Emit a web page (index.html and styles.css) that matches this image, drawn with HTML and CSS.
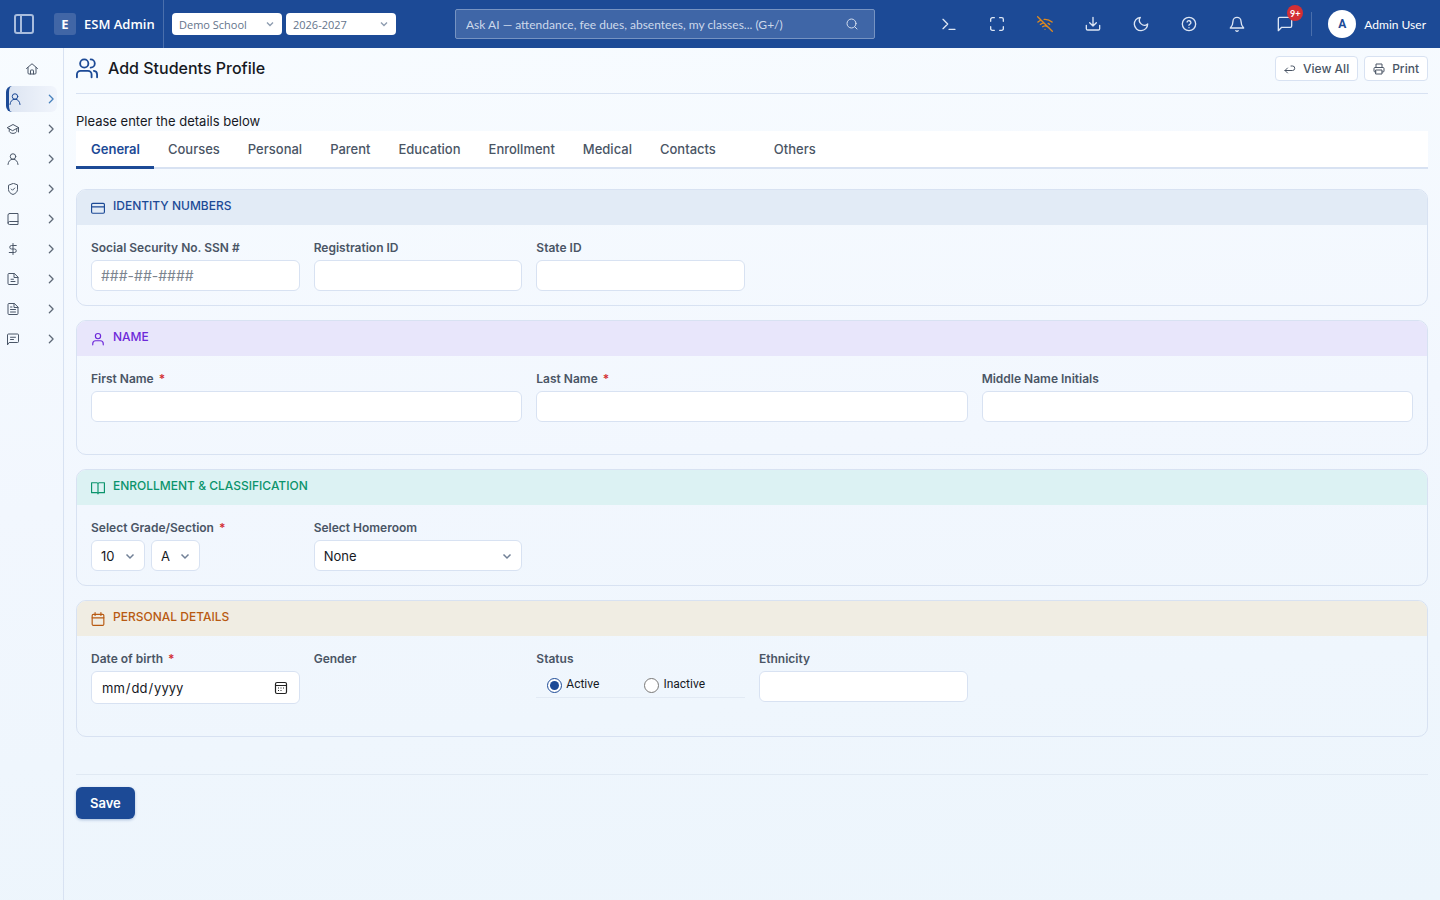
FILE: index.html
```html
<!DOCTYPE html>
<html lang="en">
<head>
<meta charset="utf-8">
<meta name="viewport" content="width=device-width, initial-scale=1">
<title>Add Students Profile</title>
<link rel="stylesheet" href="styles.css">
</head>
<body>
<svg class="sprite" aria-hidden="true">
  <symbol id="panel" viewBox="0 0 24 24"><rect x="3" y="3" width="18" height="18" rx="2"/><path d="M9 3v18"/></symbol>
  <symbol id="search" viewBox="0 0 24 24"><circle cx="11" cy="11" r="9"/><path d="m22 22-4.500-4.500"/></symbol>
  <symbol id="terminal" viewBox="0 0 24 24"><path d="m3 5 7 7-7 7M12 20h9"/></symbol>
  <symbol id="expand" viewBox="0 0 24 24"><path d="M8 2.500H5a2.500 2.500 0 0 0-2.500 2.500v3M21.500 8V5A2.500 2.500 0 0 0 19 2.500h-3M2.500 16v3A2.500 2.500 0 0 0 5 21.500h3M16 21.500h3a2.500 2.500 0 0 0 2.500-2.500v-3"/></symbol>
  <symbol id="wifi-off" viewBox="0 0 24 24"><path d="m1 1 22 22M16.700 11.100A10.900 10.900 0 0 1 19 12.600M5 12.600a10.900 10.900 0 0 1 5.200-2.400M10.700 5A16 16 0 0 1 22.600 9M1.400 9a15.900 15.900 0 0 1 4.700-2.900M8.500 16.100a6 6 0 0 1 7 0M12 20h.01"/></symbol>
  <symbol id="download" viewBox="0 0 24 24"><path d="M2 14v5a2 2 0 0 0 2 2h16a2 2 0 0 0 2-2v-5M7 10l5 5 5-5M12 15V2"/></symbol>
  <symbol id="moon" viewBox="0 0 24 24"><path d="M11 2a7.500 7.500 0 0 0 11 10A10 10 0 1 1 11 2Z"/></symbol>
  <symbol id="help" viewBox="0 0 24 24"><circle cx="12" cy="12" r="10"/><path d="M9.100 9a3 3 0 0 1 5.800 1c0 2-3 2.600-3 4M12 17.500h.01"/></symbol>
  <symbol id="bell" viewBox="0 0 24 24"><path d="M18 8A6 6 0 0 0 6 8c0 6-1.500 7.500-4 10h20c-2.500-2.500-4-4-4-10M10.300 22a2 2 0 0 0 3.400 0"/></symbol>
  <symbol id="message" viewBox="0 0 24 24"><path d="M22 15a2 2 0 0 1-2 2H7l-5 5V4a2 2 0 0 1 2-2h16a2 2 0 0 1 2 2z"/></symbol>
  <symbol id="home" viewBox="0 0 24 24"><path d="M1 11 12 1.500 23 11M4 9v11a2 2 0 0 0 2 2h12a2 2 0 0 0 2-2V9M9 22v-7a1 1 0 0 1 1-1h4a1 1 0 0 1 1 1v7"/></symbol>
  <symbol id="person" viewBox="0 0 24 24"><circle cx="12" cy="7" r="5.500"/><path d="M2 23c.5-6 4-10.500 10-10.500S21.500 17 22 23"/></symbol>
  <symbol id="user" viewBox="0 0 24 24"><circle cx="12" cy="7" r="4.500"/><path d="M3 22v-2a5 5 0 0 1 5-5h8a5 5 0 0 1 5 5v2"/></symbol>
  <symbol id="users" viewBox="0 0 24 24"><circle cx="9" cy="6" r="4.500"/><path d="M1 21v-3a4 4 0 0 1 4-4h8a4 4 0 0 1 4 4v3M16 1.500a4.500 4.500 0 0 1 0 9M19.500 14a4 4 0 0 1 3.500 4v3"/></symbol>
  <symbol id="cap" viewBox="0 0 24 24"><path d="M1 9 12 3l11 6-11 6zM4.500 11.500V17c3 5 12 5 15 0v-5.500M23 9v9"/></symbol>
  <symbol id="shield" viewBox="0 0 24 24"><path d="M12 1 3 4.500V13c0 4.500 3.500 8 9 10 5.500-2 9-5.500 9-10V4.500zM8.500 12l2.500 2.500 4.500-4.500"/></symbol>
  <symbol id="book" viewBox="0 0 24 24"><path d="M5 1h17v22H5a3 3 0 0 1-3-3V4a3 3 0 0 1 3-3ZM2 20a3 3 0 0 1 3-3h17"/></symbol>
  <symbol id="dollar" viewBox="0 0 24 24"><path d="M12 1v22M18.500 5H9a3.500 3.500 0 0 0 0 7h6a3.500 3.500 0 0 1 0 7H4.500"/></symbol>
  <symbol id="file" viewBox="0 0 24 24"><path d="M14 1H4a2 2 0 0 0-2 2v18a2 2 0 0 0 2 2h16a2 2 0 0 0 2-2V9zM14 1v8h8M8 12.500h5M8 17h8"/></symbol>
  <symbol id="file-lines" viewBox="0 0 24 24"><path d="M14 1H4a2 2 0 0 0-2 2v18a2 2 0 0 0 2 2h16a2 2 0 0 0 2-2V9zM14 1v8h8M7 8h3M7 13h10M7 18h10"/></symbol>
  <symbol id="chat" viewBox="0 0 24 24"><path d="M1 23V4a2 2 0 0 1 2-2h18a2 2 0 0 1 2 2v13a2 2 0 0 1-2 2H5zM7 8.500h10M7 13h6"/></symbol>
  <symbol id="chevron" viewBox="0 0 24 24"><path d="m8 3 9 9-9 9"/></symbol>
  <symbol id="return" viewBox="0 0 24 24"><path d="M7 10l-5 5 5 5M2 15h15a4.500 4.500 0 0 0 0-9h-3"/></symbol>
  <symbol id="printer" viewBox="0 0 24 24"><path d="M6 9V2h12v7M6 18H4a2 2 0 0 1-2-2v-5a2 2 0 0 1 2-2h16a2 2 0 0 1 2 2v5a2 2 0 0 1-2 2h-2M6 14h12v8H6z"/></symbol>
  <symbol id="card" viewBox="0 0 24 24"><rect x="1" y="4" width="22" height="17" rx="2"/><path d="M1 10h22"/></symbol>
  <symbol id="open-book" viewBox="0 0 24 24"><path d="M1 3h9a2 2 0 0 1 2 2v17a2 2 0 0 0-2-2H1zM23 3h-9a2 2 0 0 0-2 2v17a2 2 0 0 1 2-2h9z"/></symbol>
  <symbol id="calendar" viewBox="0 0 24 24"><rect x="2" y="4" width="20" height="19" rx="2"/><path d="M7 1v5M17 1v5M2 10h20"/></symbol>
</svg>

<header class="topbar">
  <button class="menu-button" type="button" aria-label="Toggle sidebar"><svg class="icon"><use href="#panel"/></svg></button>
  <a class="brand" href="#"><span class="brand-mark">E</span><span>ESM Admin</span></a>
  <div class="context">
    <select aria-label="School"><option>Demo School</option></select>
    <select aria-label="School year"><option>2026-2027</option></select>
  </div>
  <form class="search">
    <input type="text" aria-label="Ask AI" placeholder="Ask AI — attendance, fee dues, absentees, my classes... (G+/)">
    <button type="button" aria-label="Search"><svg class="icon"><use href="#search"/></svg></button>
  </form>
  <div class="actions">
    <button type="button" aria-label="Console"><svg class="icon"><use href="#terminal"/></svg></button>
    <button type="button" aria-label="Full screen"><svg class="icon"><use href="#expand"/></svg></button>
    <button class="offline" type="button" aria-label="Offline"><svg class="icon"><use href="#wifi-off"/></svg></button>
    <button type="button" aria-label="Download"><svg class="icon"><use href="#download"/></svg></button>
    <button type="button" aria-label="Dark mode"><svg class="icon"><use href="#moon"/></svg></button>
    <button type="button" aria-label="Help"><svg class="icon"><use href="#help"/></svg></button>
    <button type="button" aria-label="Notifications"><svg class="icon"><use href="#bell"/></svg></button>
    <button type="button" aria-label="Messages"><svg class="icon"><use href="#message"/></svg><span class="badge">9+</span></button>
  </div>
  <button class="account" type="button"><span class="avatar">A</span><span>Admin User</span></button>
</header>

<div class="shell">
  <nav class="sidebar" aria-label="Main">
    <a class="nav-home" href="#" aria-label="Home"><svg class="icon"><use href="#home"/></svg></a>
    <a class="nav-item active" href="#" aria-label="Students"><svg class="icon"><use href="#person"/></svg><svg class="icon arrow"><use href="#chevron"/></svg></a>
    <a class="nav-item" href="#" aria-label="Academics"><svg class="icon"><use href="#cap"/></svg><svg class="icon arrow"><use href="#chevron"/></svg></a>
    <a class="nav-item" href="#" aria-label="Staff"><svg class="icon"><use href="#person"/></svg><svg class="icon arrow"><use href="#chevron"/></svg></a>
    <a class="nav-item" href="#" aria-label="Attendance"><svg class="icon"><use href="#shield"/></svg><svg class="icon arrow"><use href="#chevron"/></svg></a>
    <a class="nav-item" href="#" aria-label="Library"><svg class="icon"><use href="#book"/></svg><svg class="icon arrow"><use href="#chevron"/></svg></a>
    <a class="nav-item" href="#" aria-label="Billing"><svg class="icon"><use href="#dollar"/></svg><svg class="icon arrow"><use href="#chevron"/></svg></a>
    <a class="nav-item" href="#" aria-label="Documents"><svg class="icon"><use href="#file"/></svg><svg class="icon arrow"><use href="#chevron"/></svg></a>
    <a class="nav-item" href="#" aria-label="Reports"><svg class="icon"><use href="#file-lines"/></svg><svg class="icon arrow"><use href="#chevron"/></svg></a>
    <a class="nav-item" href="#" aria-label="Messaging"><svg class="icon"><use href="#chat"/></svg><svg class="icon arrow"><use href="#chevron"/></svg></a>
  </nav>

  <main class="content">
    <div class="page-head">
      <svg class="icon"><use href="#users"/></svg>
      <h1>Add Students Profile</h1>
      <button type="button"><svg class="icon"><use href="#return"/></svg>View All</button>
      <button type="button"><svg class="icon"><use href="#printer"/></svg>Print</button>
    </div>
    <p class="intro">Please enter the details below</p>
    <nav class="tabs" aria-label="Profile sections">
      <a class="current" href="#">General</a>
      <a href="#">Courses</a>
      <a href="#">Personal</a>
      <a href="#">Parent</a>
      <a href="#">Education</a>
      <a href="#">Enrollment</a>
      <a href="#">Medical</a>
      <a href="#">Contacts</a>
      <a class="apart" href="#">Others</a>
    </nav>

    <form class="profile">
      <section class="panel blue">
        <h2><svg class="icon"><use href="#card"/></svg>Identity Numbers</h2>
        <div class="fields">
          <div class="field"><label for="ssn">Social Security No. SSN #</label><input id="ssn" type="text" placeholder="###-##-####"></div>
          <div class="field"><label for="reg">Registration ID</label><input id="reg" type="text"></div>
          <div class="field"><label for="state">State ID</label><input id="state" type="text"></div>
        </div>
      </section>

      <section class="panel purple">
        <h2><svg class="icon"><use href="#user"/></svg>Name</h2>
        <div class="fields roomy">
          <div class="field wide"><label for="first">First Name <span class="required">*</span></label><input id="first" type="text"></div>
          <div class="field wide"><label for="last">Last Name <span class="required">*</span></label><input id="last" type="text"></div>
          <div class="field wide"><label for="middle">Middle Name Initials</label><input id="middle" type="text"></div>
        </div>
      </section>

      <section class="panel green">
        <h2><svg class="icon"><use href="#open-book"/></svg>Enrollment &amp; Classification</h2>
        <div class="fields">
          <div class="field">
            <label for="grade">Select Grade/Section <span class="required">*</span></label>
            <div class="pair">
              <select id="grade"><option>10</option></select>
              <select aria-label="Section"><option>A</option></select>
            </div>
          </div>
          <div class="field"><label for="homeroom">Select Homeroom</label><select id="homeroom"><option>None</option></select></div>
        </div>
      </section>

      <section class="panel amber">
        <h2><svg class="icon"><use href="#calendar"/></svg>Personal Details</h2>
        <div class="fields roomy">
          <div class="field"><label for="dob">Date of birth <span class="required">*</span></label><input id="dob" type="date"></div>
          <div class="field"><span class="label">Gender</span></div>
          <div class="field" role="radiogroup" aria-labelledby="status">
            <span class="label" id="status">Status</span>
            <div class="choices">
              <label><input type="radio" name="status" checked><span>Active</span></label>
              <label><input type="radio" name="status"><span>Inactive</span></label>
            </div>
          </div>
          <div class="field"><label for="ethnicity">Ethnicity</label><input id="ethnicity" type="text"></div>
        </div>
      </section>

      <div class="form-foot"><button type="submit">Save</button></div>
    </form>
  </main>
</div>
</body>
</html>
```
FILE: styles.css
```css
:root {
  --blue: #1c4a96;
  --line: #d8e2f2;
  --ink: #16191f;
  --muted: #4a5565;
}

* { box-sizing: border-box; }

body {
  margin: 0;
  min-height: 100vh;
  display: flex;
  flex-direction: column;
  background: linear-gradient(175deg, #f8fcff 0%, #f2f7fe 50%, #ecf5fc 100%);
  color: var(--ink);
  font-family: Inter, sans-serif;
  font-size: 13px;
}

button, input, select { font: inherit; color: inherit; }
button { cursor: pointer; }
a { color: inherit; text-decoration: none; }
.sprite { display: none; }

.icon {
  width: 16px;
  height: 16px;
  flex: none;
  fill: none;
  stroke: currentColor;
  stroke-width: 2;
  stroke-linecap: round;
  stroke-linejoin: round;
}

/* Top bar */
.topbar {
  display: flex;
  align-items: center;
  height: 48px;
  background: var(--blue);
  color: #fff;
  font-family: Lato, "Open Sans", sans-serif;
  font-size: 12px;
}

.topbar button {
  display: flex;
  align-items: center;
  justify-content: center;
  padding: 0;
  border: 0;
  background: none;
}

.topbar .menu-button { width: 48px; height: 48px; color: #a9bddd; }
.menu-button .icon { width: 24px; height: 24px; }

.brand {
  display: flex;
  align-items: center;
  align-self: stretch;
  gap: 8px;
  width: 116px;
  padding-left: 6px;
  border-right: 1px solid #4a6fac;
  font-family: "Open Sans", sans-serif;
  font-size: 13px;
  font-weight: 600;
  white-space: nowrap;
}

.brand-mark {
  display: grid;
  place-items: center;
  width: 22px;
  height: 22px;
  border-radius: 3px;
  background: #4166a6;
  font-weight: 700;
}

.context { display: flex; gap: 4px; padding-left: 8px; }

.context select {
  appearance: none;
  width: 110px;
  height: 22px;
  padding: 0 20px 0 7px;
  border: 0;
  border-radius: 4px;
  background: #fff url("data:image/svg+xml,%3Csvg xmlns='http://www.w3.org/2000/svg' viewBox='0 0 12 12' fill='none' stroke='%238e9db0' stroke-width='1.400'%3E%3Cpath d='m3 4.500 3 3 3-3'/%3E%3C/svg%3E") no-repeat right 6px center / 12px;
  color: #64748b;
  font-family: "Open Sans", sans-serif;
  font-size: 11px;
}

.search {
  display: flex;
  align-items: center;
  width: 420px;
  height: 30px;
  margin-left: 59px;
  padding: 0 14px 0 10px;
  border: 1px solid #7693c2;
  border-radius: 2px;
  background: #3f66a7;
}

.search input {
  flex: 1;
  min-width: 0;
  padding: 0;
  border: 0;
  background: none;
}

.search input::placeholder { color: #cdd9eb; opacity: 1; }
.search .icon { width: 12px; height: 12px; margin-right: 2px; color: #d5dff0; }

.actions { display: flex; margin-left: auto; }
.topbar .actions button { position: relative; width: 48px; height: 48px; color: #dde6f4; }
.topbar .actions .offline { color: #e08a1e; }

.badge {
  position: absolute;
  top: 5px;
  right: 6px;
  display: grid;
  place-items: center;
  width: 16px;
  height: 16px;
  border-radius: 8px;
  background: #d32f35;
  color: #fff;
  font-size: 9px;
  font-weight: 700;
}

.topbar .account {
  gap: 8px;
  height: 24px;
  margin: 0 14px 0 2px;
  padding-left: 16px;
  border-left: 1px solid #4a6fac;
}

.avatar {
  display: grid;
  place-items: center;
  width: 28px;
  height: 28px;
  border-radius: 50%;
  background: #fff;
  color: var(--blue);
  font-family: Roboto, sans-serif;
  font-weight: 700;
}

/* Page frame */
.shell { display: flex; flex: 1; }

.sidebar {
  display: flex;
  flex-direction: column;
  gap: 4px;
  width: 64px;
  flex: none;
  padding: 8px 6px;
  border-right: 1px solid var(--line);
  color: #4b5768;
}

.nav-home, .nav-item { display: flex; align-items: center; height: 26px; }
.nav-home { justify-content: center; }
.sidebar .icon { width: 12px; height: 12px; stroke-width: 2; }
.nav-item { justify-content: space-between; padding: 0 1px; border-radius: 6px; }
.sidebar .arrow { width: 10px; height: 10px; color: #5f6a78; stroke-width: 3; }

.nav-item.active {
  padding-left: 0;
  border-left: 3px solid var(--blue);
  background: linear-gradient(90deg, #dde5f2, #f1f5fc);
  color: var(--blue);
}

.sidebar .active .arrow { color: #4882bd; }

.content { flex: 1; min-width: 0; padding: 8px 12px; }

.page-head {
  display: flex;
  align-items: center;
  gap: 6px;
  padding-bottom: 12px;
  border-bottom: 1px solid var(--line);
}

.page-head > .icon { width: 22px; height: 22px; color: var(--blue); }
.page-head h1 {
  flex: 1;
  margin: 0 0 0 4px;
  padding-bottom: 2px;
  font-size: 16px;
  font-weight: 500;
  line-height: 22px;
}

.page-head button {
  display: flex;
  align-items: center;
  gap: 7px;
  height: 25px;
  padding: 0 8px;
  border: 1px solid var(--line);
  border-radius: 4px;
  background: #fff;
  color: var(--muted);
  font-size: 12px;
  font-weight: 500;
}

.page-head button .icon { width: 12px; height: 12px; }

.intro { margin: 17px 0 0; line-height: 20px; }

/* Tabs */
.tabs {
  display: flex;
  height: 38px;
  margin-bottom: 20px;
  border-bottom: 2px solid var(--line);
  background: #fff;
  color: var(--muted);
  font-weight: 500;
}

.tabs a { height: 38px; padding: 0 14px; line-height: 36px; }
.tabs .current { padding-left: 15px; border-bottom: 3px solid var(--blue); color: var(--blue); font-weight: 600; }
.tabs .apart { margin-left: 30px; }

/* Form panels */
.profile { display: flex; flex-direction: column; gap: 14px; }
.panel { overflow: hidden; border: 1px solid var(--line); border-radius: 10px; }

.panel h2 {
  display: flex;
  align-items: center;
  gap: 8px;
  height: 35px;
  margin: 0;
  padding: 0 14px 4px;
  font-size: 12px;
  font-weight: 500;
  text-transform: uppercase;
}

.panel h2 .icon { width: 14px; height: 14px; margin-top: 4px; }
.blue h2 { background: #e2ebf6; color: var(--blue); }
.purple h2 { background: #e8e6fb; color: #6d28d9; }
.green h2 { background: #dcf2f3; color: #0b946c; }
.amber h2 { background: #f0ede3; color: #b85a12; }

.fields {
  display: grid;
  grid-template-columns: repeat(6, 1fr);
  gap: 14px;
  align-items: start;
  padding: 14px;
}

.roomy { padding-bottom: 32px; }
.wide { grid-column: span 2; }
.field { display: flex; flex-direction: column; gap: 4px; min-width: 0; }

.field > label, .label {
  color: var(--muted);
  font-size: 12px;
  font-weight: 600;
  line-height: 17px;
}

.required { margin-left: 2px; color: #d32f35; }

.field input[type="text"], .field input[type="date"], .field select {
  width: 100%;
  height: 31px;
  padding: 0 9px;
  border: 1px solid var(--line);
  border-radius: 6px;
  background-color: #fff;
}

.field input[type="date"] { height: 33px; padding-right: 11px; }
.field input::placeholder { color: #7c848f; font-size: 14px; opacity: 1; }

.field input[type="date"]::-webkit-calendar-picker-indicator {
  width: 14px;
  height: 14px;
  padding: 0;
  background: url("data:image/svg+xml,%3Csvg xmlns='http://www.w3.org/2000/svg' viewBox='0 0 14 14' fill='none' stroke='%23222' stroke-width='1.200'%3E%3Crect x='1.500' y='1.500' width='11' height='11' rx='1.500'/%3E%3Cpath d='M1.500 4.500h11M6.500 7h1M9 7h1M4 7h1M4 9.500h1M6.500 9.500h1'/%3E%3C/svg%3E") center / 14px no-repeat;
}

.field select {
  appearance: none;
  padding-right: 29px;
  background-image: url("data:image/svg+xml,%3Csvg xmlns='http://www.w3.org/2000/svg' viewBox='0 0 12 12' fill='none' stroke='%23718096' stroke-width='1.500'%3E%3Cpath d='m2.500 4.500 3.500 3.500 3.500-3.500'/%3E%3C/svg%3E");
  background-repeat: no-repeat;
  background-position: right 8px center;
  background-size: 12px;
}

.pair { display: flex; gap: 6px; }
.field .pair select { width: auto; }

.choices {
  display: flex;
  height: 27px;
  gap: 45px;
  padding-left: 11px;
  border-bottom: 1px solid #e2eaf4;
  font-family: Roboto, sans-serif;
  font-size: 12px;
}

.choices label { display: flex; align-items: center; gap: 4px; }
.choices input { width: 15px; height: 15px; margin: 2px 0 0; accent-color: var(--blue); }

.form-foot { margin-top: 23px; padding-top: 12px; border-top: 1px solid #e0e9f3; }

.form-foot button {
  height: 32px;
  padding: 0 14px;
  border: 0;
  border-radius: 6px;
  background: var(--blue);
  box-shadow: 0 1px 3px #1c4a9655;
  color: #fff;
  font-weight: 600;
}
```
